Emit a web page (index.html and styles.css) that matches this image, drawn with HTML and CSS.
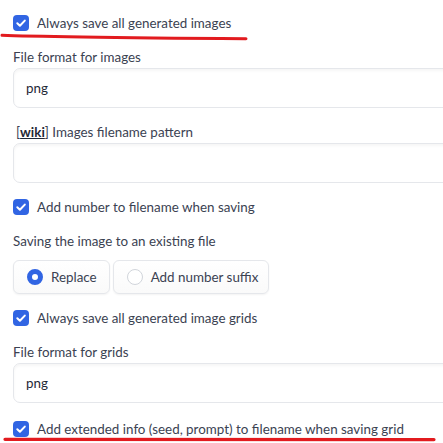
FILE: index.html
```html
<!DOCTYPE html>
<html>
<head>
<meta charset="utf-8">
<link rel="stylesheet" href="styles.css">
</head>
<body>
<div class="panel">
  <label class="check">
    <span class="box"><svg viewBox="0 0 16 16" width="16" height="16"><path d="M4.3 8.3 L6.9 10.8 L11.8 5.6" fill="none" stroke="#fff" stroke-width="2" stroke-linecap="round" stroke-linejoin="round"/></svg></span>
    <span>Always save all generated images</span>
  </label>

  <div class="field">
    <div class="label">File format for images</div>
    <div class="input">png</div>
  </div>

  <div class="field">
    <div class="label"><span class="bracket">[</span><a class="wiki">wiki</a><span class="bracket-end">]</span> Images filename pattern</div>
    <div class="input"></div>
  </div>

  <label class="check">
    <span class="box"><svg viewBox="0 0 16 16" width="16" height="16"><path d="M4.3 8.3 L6.9 10.8 L11.8 5.6" fill="none" stroke="#fff" stroke-width="2" stroke-linecap="round" stroke-linejoin="round"/></svg></span>
    <span>Add number to filename when saving</span>
  </label>

  <div class="field radio-field">
    <div class="label">Saving the image to an existing file</div>
    <div class="radios">
      <label class="radio"><span class="dot on"></span><span>Replace</span></label>
      <label class="radio"><span class="dot"></span><span>Add number suffix</span></label>
    </div>
  </div>

  <label class="check">
    <span class="box"><svg viewBox="0 0 16 16" width="16" height="16"><path d="M4.3 8.3 L6.9 10.8 L11.8 5.6" fill="none" stroke="#fff" stroke-width="2" stroke-linecap="round" stroke-linejoin="round"/></svg></span>
    <span>Always save all generated image grids</span>
  </label>

  <div class="field">
    <div class="label">File format for grids</div>
    <div class="input">png</div>
  </div>

  <label class="check last">
    <span class="box"><svg viewBox="0 0 16 16" width="16" height="16"><path d="M4.3 8.3 L6.9 10.8 L11.8 5.6" fill="none" stroke="#fff" stroke-width="2" stroke-linecap="round" stroke-linejoin="round"/></svg></span>
    <span>Add extended info (seed, prompt) to filename when saving grid</span>
  </label>
</div>

<svg class="marks" width="443" height="443" viewBox="0 0 443 443">
  <path d="M2 35.2 C 40 36.8, 120 37.6, 246 38.8" fill="none" stroke="#e21b1f" stroke-width="3" stroke-linecap="round"/>
  <path d="M5 439.3 L 434 439.6" fill="none" stroke="#e21b1f" stroke-width="3.2" stroke-linecap="round"/>
</svg>
</body>
</html>
```

FILE: styles.css
```css
html, body {
  margin: 0;
  padding: 0;
  background: #fff;
  overflow: hidden;
}

body {
  width: 443px;
  height: 443px;
  position: relative;
  font-family: "Lato", "Noto Sans", sans-serif;
  font-size: 13.4px;
  color: #3b4252;
}

.panel {
  display: flex;
  flex-direction: column;
  gap: 14px;
  padding: 13px 0 0 13px;
}

.check {
  display: flex;
  align-items: center;
  gap: 8px;
  height: 20px;
  line-height: 20px;
}

.check.last {
  margin-top: 2px;
}

.box {
  width: 16px;
  height: 16px;
  border-radius: 4px;
  background: #3165e3;
  display: flex;
  flex: none;
}

.field {
  display: flex;
  flex-direction: column;
  gap: 1px;
}

.radio-field {
  gap: 9px;
}

.label {
  line-height: 20px;
  height: 20px;
}

.bracket {
  margin-left: 3px;
}

.wiki {
  font-weight: 700;
  color: #1f2937;
  text-decoration: underline;
}

.input {
  height: 40px;
  box-sizing: border-box;
  margin-right: -12px;
  border: 1px solid #e5e7eb;
  border-radius: 7px;
  box-shadow: inset 0 2px 3px rgba(0, 0, 0, 0.04);
  padding: 0 12px;
  display: flex;
  align-items: center;
  color: #1f2937;
}

.radios {
  display: flex;
  gap: 3px;
}

.radio {
  display: flex;
  align-items: center;
  gap: 8px;
  height: 34px;
  box-sizing: border-box;
  padding: 0 12px 0 13px;
  border: 1px solid #e5e7eb;
  border-radius: 6px;
  background: linear-gradient(#fff, #fafafa);
  box-shadow: 0 1px 2px rgba(0, 0, 0, 0.05);
}

.radio + .radio {
  padding: 0 10px 0 13px;
}

.dot {
  width: 16px;
  height: 16px;
  box-sizing: border-box;
  border-radius: 50%;
  border: 1px solid #d1d5db;
  background: #fff;
  flex: none;
}

.dot.on {
  border: 5px solid #3165e3;
  background: #fff;
}

.marks {
  position: absolute;
  top: 0;
  left: 0;
  pointer-events: none;
}
```
